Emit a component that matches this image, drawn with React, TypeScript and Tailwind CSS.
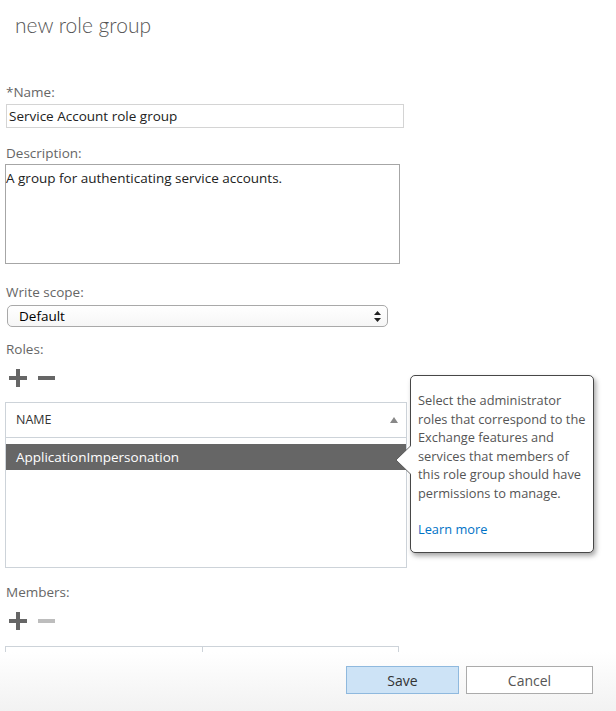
const font = { fontFamily: '"Open Sans", "Noto Sans", sans-serif' };

function AddRemove({ removeEnabled }: { removeEnabled: boolean }) {
  return (
    <div className="flex items-center gap-[11px] pl-[9px] h-[20px]">
      <svg width="18" height="18" viewBox="0 0 18 18">
        <rect x="7" y="0" width="4" height="18" fill="#666" />
        <rect x="0" y="7" width="18" height="4" fill="#666" />
      </svg>
      <svg width="17" height="18" viewBox="0 0 17 18">
        <rect x="0" y="7" width="17" height="4" fill={removeEnabled ? '#666' : '#bdbdbd'} />
      </svg>
    </div>
  );
}

export default function App() {
  return (
    <div className="relative w-[616px] h-[711px] overflow-hidden bg-white flex flex-col" style={font}>
      {/* Scrollable form area */}
      <div className="flex-1 overflow-hidden">
        <div
          className="pl-[15px] pt-[10px] h-[30px] box-content text-[21px] leading-[30px] font-light text-[#555]"
          style={{ fontFamily: 'Lato, "Open Sans", sans-serif' }}
        >
          new role group
        </div>

        <div className="pl-[6px] mt-[42px] text-[13.5px] leading-[20px] text-[#666]">*Name:</div>
        <div className="ml-[6px] mt-[2px] w-[398px] h-[24px] border border-[#d4d4d4] flex items-center pl-[2px] text-[13.5px] text-[#222]">
          Service Account role group
        </div>

        <div className="pl-[6px] mt-[15px] text-[13.5px] leading-[20px] text-[#666]">Description:</div>
        <div className="ml-[5px] mt-[1px] w-[395px] h-[100px] border border-[#a6a6a6] text-[13.5px] leading-[20px] text-[#222] pt-[3px]">
          A group for authenticating service accounts.
        </div>

        <div className="pl-[6px] mt-[18px] text-[13.5px] leading-[20px] text-[#666]">Write scope:</div>
        <div className="ml-[7px] mt-[3px] w-[381px] h-[22px] border border-[#a9a9a9] rounded-[5px] bg-gradient-to-b from-white to-[#f6f6f6] flex items-center justify-between pl-[11px] pr-[6px] text-[13.5px] text-black">
          <span>Default</span>
          <svg width="7" height="11" viewBox="0 0 7 11">
            <path d="M3.5 0 L7 4 L0 4 Z" fill="#222" />
            <path d="M3.5 11 L7 7 L0 7 Z" fill="#222" />
          </svg>
        </div>

        <div className="pl-[6px] mt-[12px] text-[13.5px] leading-[20px] text-[#666]">Roles:</div>
        <div className="mt-[9px]">
          <AddRemove removeEnabled />
        </div>

        <div className="ml-[5px] mt-[14px] w-[402px] h-[166px] border border-[#cdd3d9]">
          <div className="h-[35px] border-b border-[#cdd3d9] flex items-center justify-between pl-[10px] pr-[8px] text-[12.5px] text-[#333]">
            <span>NAME</span>
            <svg width="8" height="6" viewBox="0 0 8 6">
              <path d="M4 0 L8 6 L0 6 Z" fill="#888" />
            </svg>
          </div>
          <div className="mt-[6px] h-[26px] bg-[#666] flex items-center pl-[10px] text-[13.5px] text-white">
            ApplicationImpersonation
          </div>
        </div>

        <div className="pl-[6px] mt-[14px] text-[13.5px] leading-[20px] text-[#666]">Members:</div>
        <div className="mt-[9px]">
          <AddRemove removeEnabled={false} />
        </div>

        <div className="ml-[5px] mt-[15px] w-[394px] h-[40px] border-l border-r border-t border-[#cdd3d9] flex">
          <div className="w-[197px] border-r border-[#cdd3d9]" />
        </div>
      </div>

      {/* Footer */}
      <div className="h-[59px] shrink-0 bg-gradient-to-b from-white to-[#f2f2f2] flex justify-end items-start pt-[14px] pr-[23px] gap-[7px]">
        <button className="w-[113px] h-[28px] bg-[#cde3f6] border border-[#8fb9de] text-[14px] text-[#333]">
          Save
        </button>
        <button className="w-[127px] h-[28px] bg-white border border-[#ababab] text-[14px] text-[#555]">
          Cancel
        </button>
      </div>

      {/* Help callout */}
      <div className="absolute left-[410px] top-[375px] w-[184px] h-[178px] bg-white border border-[#474747] rounded-[5px] shadow-[2px_3px_5px_rgba(0,0,0,0.35)] pl-[7px] pt-[15px] text-[12.8px] leading-[18.6px] text-[#555]">
        <p>
          Select the administrator
          <br />
          roles that correspond to the
          <br />
          Exchange features and
          <br />
          services that members of
          <br />
          this role group should have
          <br />
          permissions to manage.
        </p>
        <p className="mt-[17px] text-[#0072c6]">Learn more</p>
        <svg className="absolute left-[-16px] top-[69px]" width="17" height="30" viewBox="0 0 17 30">
          <path d="M16.5 0 L1 15 L16.5 30" fill="white" stroke="#474747" strokeWidth="0.8" />
          <rect x="16" y="0" width="2" height="30" fill="white" />
        </svg>
      </div>
    </div>
  );
}
